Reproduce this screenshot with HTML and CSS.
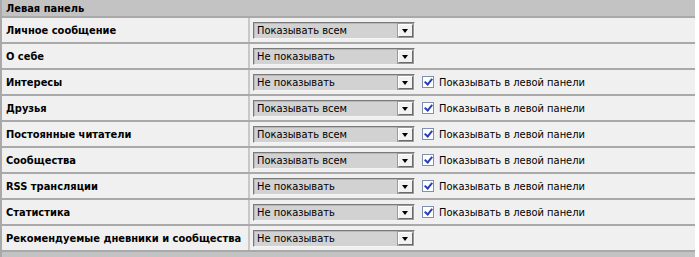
FILE: index.html
```html
<!DOCTYPE html>
<html lang="ru">
<head>
    <meta charset="UTF-8">
    <title>Левая панель</title>
    <link rel="stylesheet" href="styles.css">
</head>
<body>
    <table class="panel">
        <tr class="panel-head">
            <th colspan="2">Левая панель</th>
        </tr>
        <tr>
            <td class="label">Личное сообщение</td>
            <td class="opts"><div class="pick"><span class="pick-val">Показывать всем</span><span class="pick-btn"></span></div></td>
        </tr>
        <tr>
            <td class="label">О себе</td>
            <td class="opts"><div class="pick"><span class="pick-val">Не показывать</span><span class="pick-btn"></span></div></td>
        </tr>
        <tr>
            <td class="label">Интересы</td>
            <td class="opts"><div class="pick"><span class="pick-val">Не показывать</span><span class="pick-btn"></span></div><span class="check"></span><span class="check-text">Показывать в левой панели</span></td>
        </tr>
        <tr>
            <td class="label">Друзья</td>
            <td class="opts"><div class="pick"><span class="pick-val">Показывать всем</span><span class="pick-btn"></span></div><span class="check"></span><span class="check-text">Показывать в левой панели</span></td>
        </tr>
        <tr>
            <td class="label">Постоянные читатели</td>
            <td class="opts"><div class="pick"><span class="pick-val">Показывать всем</span><span class="pick-btn"></span></div><span class="check"></span><span class="check-text">Показывать в левой панели</span></td>
        </tr>
        <tr>
            <td class="label">Сообщества</td>
            <td class="opts"><div class="pick"><span class="pick-val">Показывать всем</span><span class="pick-btn"></span></div><span class="check"></span><span class="check-text">Показывать в левой панели</span></td>
        </tr>
        <tr>
            <td class="label">RSS трансляции</td>
            <td class="opts"><div class="pick"><span class="pick-val">Не показывать</span><span class="pick-btn"></span></div><span class="check"></span><span class="check-text">Показывать в левой панели</span></td>
        </tr>
        <tr>
            <td class="label">Статистика</td>
            <td class="opts"><div class="pick"><span class="pick-val">Не показывать</span><span class="pick-btn"></span></div><span class="check"></span><span class="check-text">Показывать в левой панели</span></td>
        </tr>
        <tr>
            <td class="label">Рекомендуемые дневники и сообщества</td>
            <td class="opts"><div class="pick"><span class="pick-val">Не показывать</span><span class="pick-btn"></span></div></td>
        </tr>
        <tr class="panel-foot">
            <td colspan="2"></td>
        </tr>
    </table>
</body>
</html>
```
FILE: styles.css
```css
body {
    margin: 0;
    background-color: #ffffff;
    font-family: "DejaVu Sans Condensed", "DejaVu Sans", Verdana, sans-serif;
    font-stretch: condensed;
    font-size: 11px;
    color: #000000;
}

.panel {
    width: 695px;
    border-collapse: collapse;
    border-left: 2px solid #a9a9a9;
    background-color: #f0f0f0;
}

.panel-head th {
    background-color: #c3c3c3;
    text-align: left;
    font-weight: bold;
    height: 16px;
    padding: 0 4px;
    border-bottom: 2px solid #a9a9a9;
}

.panel td {
    height: 24px;
    padding: 0;
    border-bottom: 2px solid #a9a9a9;
}

.label {
    width: 242px;
    padding-left: 4px !important;
    font-weight: bold;
    white-space: nowrap;
    border-right: 2px solid #c8c8c8;
}

.opts {
    padding-left: 3px !important;
    white-space: nowrap;
}

.pick {
    display: inline-flex;
    align-items: center;
    vertical-align: middle;
    box-sizing: border-box;
    width: 162px;
    height: 17px;
    background-color: #d2d2d2;
    border: 1px solid #f4f4f4;
    border-top-color: #7a7a7a;
    border-left-color: #7a7a7a;
    box-shadow: inset 1px 1px 0 #b8b8b8;
}

.pick-val {
    flex: 1;
    padding-left: 3px;
    line-height: 15px;
}

.pick-btn {
    position: relative;
    box-sizing: border-box;
    width: 15px;
    height: 13px;
    margin-right: 1px;
    background-color: #f2f2f2;
    border: 1px solid #6a6a6a;
    border-top-color: #ffffff;
    border-left-color: #ffffff;
    box-shadow: 0 0 0 1px #9a9a9a;
}

.pick-btn::after {
    content: "";
    position: absolute;
    left: 3px;
    top: 4px;
    border-left: 3px solid transparent;
    border-right: 3px solid transparent;
    border-top: 4px solid #000000;
}

.check {
    display: inline-block;
    vertical-align: middle;
    box-sizing: border-box;
    width: 12px;
    height: 12px;
    margin-left: 7px;
    background-color: #ffffff;
    border: 1px solid #7f8fb0;
    position: relative;
}

.check::after {
    content: "";
    position: absolute;
    left: 3px;
    top: 0px;
    width: 3px;
    height: 6px;
    border-right: 2px solid #2a3fb8;
    border-bottom: 2px solid #2a3fb8;
    transform: rotate(40deg);
}

.check-text {
    vertical-align: middle;
    margin-left: 5px;
}

.panel-foot td {
    height: 6px;
    background-color: #c3c3c3;
    border-bottom: none;
}
```
